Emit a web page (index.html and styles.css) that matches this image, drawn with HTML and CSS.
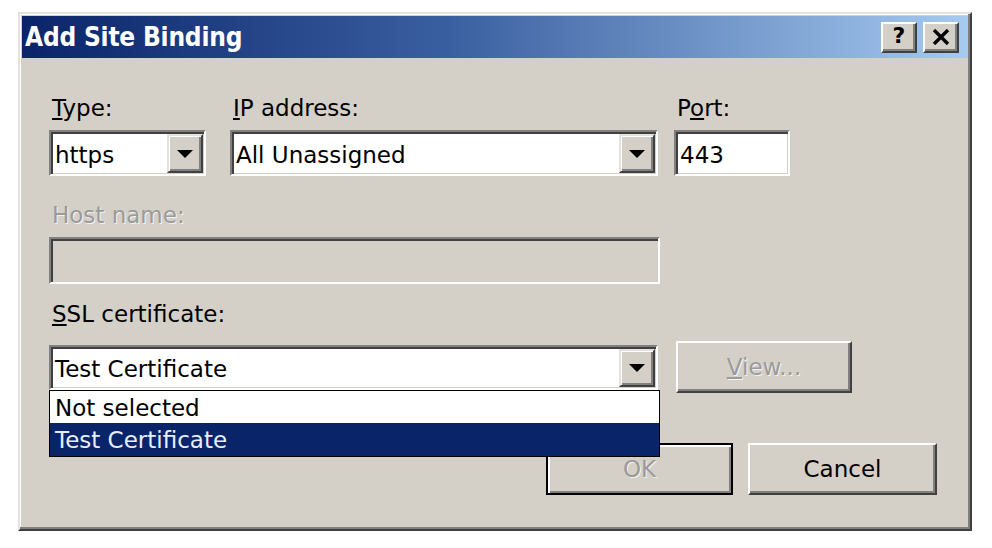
FILE: index.html
```html
<!DOCTYPE html>
<html>
<head>
<meta charset="utf-8">
<title>Add Site Binding</title>
<link rel="stylesheet" href="styles.css">
</head>
<body>
<div class="dialog">
  <div class="titlebar">
    <span class="title">Add Site Binding</span>
    <div class="tbuttons">
      <span class="tbtn help">?</span>
      <span class="tbtn close"><svg width="18" height="16" viewBox="0 0 18 16"><path d="M2 1 L16 15 M16 1 L2 15" stroke="#000" stroke-width="3.4" fill="none"/></svg></span>
    </div>
  </div>
  <div class="content">
    <div class="row-top">
      <div class="field f-type">
        <div class="lbl"><u>T</u>ype:</div>
        <div class="combo">
          <span class="val">https</span>
          <span class="drop"><svg width="16" height="8" viewBox="0 0 16 8"><polygon points="0,0 16,0 8,8" fill="#000"/></svg></span>
        </div>
      </div>
      <div class="field f-ip">
        <div class="lbl"><u>I</u>P address:</div>
        <div class="combo">
          <span class="val">All Unassigned</span>
          <span class="drop"><svg width="16" height="8" viewBox="0 0 16 8"><polygon points="0,0 16,0 8,8" fill="#000"/></svg></span>
        </div>
      </div>
      <div class="field f-port">
        <div class="lbl">P<u>o</u>rt:</div>
        <div class="textbox"><span class="val">443</span></div>
      </div>
    </div>

    <div class="field f-host">
      <div class="lbl disabled">Host name:</div>
      <div class="textbox host"></div>
    </div>

    <div class="field f-ssl">
      <div class="lbl ssl-lbl"><u>S</u>SL certificate:</div>
      <div class="ssl-row">
        <div class="combo ssl-combo">
          <span class="val">Test Certificate</span>
          <span class="drop"><svg width="16" height="8" viewBox="0 0 16 8"><polygon points="0,0 16,0 8,8" fill="#000"/></svg></span>
          <ul class="droplist">
            <li class="opt">Not selected</li>
            <li class="opt selected">Test Certificate</li>
          </ul>
        </div>
        <div class="btn view disabled"><span><u>V</u>iew...</span></div>
      </div>
    </div>

    <div class="actions">
      <div class="btn ok default disabled"><span>OK</span></div>
      <div class="btn cancel"><span>Cancel</span></div>
    </div>
  </div>
</div>
</body>
</html>
```

FILE: styles.css
```css
html, body {
  margin: 0;
  padding: 0;
  background: #ffffff;
}

body {
  font-family: "DejaVu Sans", "Liberation Sans", sans-serif;
  font-size: 23px;
  color: #000;
}

.dialog {
  margin: 12px 0 0 18px;
  width: 954px;
  height: 519px;
  box-sizing: border-box;
  background: #d4d0c8;
  border: 2px solid;
  border-color: #e4e2dc #404040 #404040 #e4e2dc;
  box-shadow: inset -2px -2px 0 #808080, inset 1px 1px 0 #ffffff;
  padding: 2px;
}

/* title bar */
.titlebar {
  height: 42px;
  display: flex;
  align-items: center;
  background: linear-gradient(to right, #0a246a 0%, #3a5fa0 45%, #a6caf0 100%);
  padding: 0 9px 0 3px;
}

.title {
  font-family: "DejaVu Sans Condensed", "DejaVu Sans", sans-serif;
  font-stretch: condensed;
  font-weight: bold;
  font-size: 26px;
  color: #ffffff;
  letter-spacing: -0.2px;
}

.tbuttons {
  margin-left: auto;
  display: flex;
  gap: 6px;
}

.tbtn {
  width: 36px;
  height: 31px;
  box-sizing: border-box;
  background: #d4d0c8;
  border: 2px solid;
  border-color: #ffffff #404040 #404040 #ffffff;
  box-shadow: inset -2px -2px 0 #808080;
  display: flex;
  align-items: center;
  justify-content: center;
}

.tbtn.help {
  font-weight: bold;
  font-size: 22px;
  line-height: 1;
  padding-bottom: 2px;
}

/* content */
.content {
  padding: 36px 31px 0 27px;
}

.row-top {
  display: flex;
}

.field {
  display: flex;
  flex-direction: column;
}

.f-type { width: 157px; }
.f-ip { width: 428px; margin-left: 24px; }
.f-port { width: 116px; margin-left: 16px; }

.lbl {
  height: 28px;
  line-height: 28px;
  padding-left: 3px;
  margin-bottom: 8px;
  white-space: nowrap;
}

.lbl.disabled {
  color: #9a9a9a;
  text-shadow: 1px 1px 0 #f4f3f0;
}

.combo, .textbox {
  position: relative;
  height: 46px;
  box-sizing: border-box;
  background: #ffffff;
  border: 2px solid;
  border-color: #808080 #ffffff #ffffff #808080;
  box-shadow: inset 2px 2px 0 #404040, inset -1px -1px 0 #d4d0c8;
  display: flex;
  align-items: center;
}

.val {
  flex: 1;
  padding: 3px 0 0 4px;
  white-space: nowrap;
}

.drop {
  align-self: stretch;
  width: 36px;
  margin: 2px 1px 1px 0;
  box-sizing: border-box;
  background: #d4d0c8;
  border: 2px solid;
  border-color: #e4e2dc #404040 #404040 #e4e2dc;
  box-shadow: inset 1px 1px 0 #ffffff, inset -2px -2px 0 #808080;
  display: flex;
  align-items: center;
  justify-content: center;
}

.f-host {
  margin-top: 25px;
  width: 611px;
}

.textbox.host {
  height: 47px;
  background: #d4d0c8;
}

.f-ssl {
  margin-top: 16px;
}

.ssl-lbl {
  margin-bottom: 13px;
}

.ssl-row {
  display: flex;
  align-items: center;
}

.ssl-combo {
  width: 609px;
  height: 45px;
}

.droplist {
  position: absolute;
  left: -2px;
  top: calc(100% + 2px);
  width: 611px;
  box-sizing: border-box;
  margin: 0;
  padding: 0;
  list-style: none;
  border: 1px solid #000;
  background: #ffffff;
  z-index: 5;
}

.opt {
  height: 29px;
  line-height: 29px;
  padding: 3px 0 0 5px;
  white-space: nowrap;
}

.opt.selected {
  height: 30px;
  background: #0a246a;
  color: #e8eeff;
}

/* buttons */
.btn {
  height: 52px;
  box-sizing: border-box;
  background: #d4d0c8;
  border: 2px solid;
  border-color: #ffffff #404040 #404040 #ffffff;
  box-shadow: inset -2px -2px 0 #808080;
  display: flex;
  align-items: center;
  justify-content: center;
  white-space: nowrap;
}

.btn.view {
  width: 176px;
  margin-left: 18px;
}

.btn.disabled {
  color: #9a9a9a;
  text-shadow: 1px 1px 0 #f4f3f0;
}

.actions {
  margin-top: 50px;
  display: flex;
  justify-content: flex-end;
  gap: 15px;
}

.btn.ok {
  width: 187px;
}

.btn.default {
  border: 2px solid #000;
  box-shadow: inset 2px 2px 0 #ffffff, inset -2px -2px 0 #808080;
}

.btn.cancel {
  width: 189px;
}
```
